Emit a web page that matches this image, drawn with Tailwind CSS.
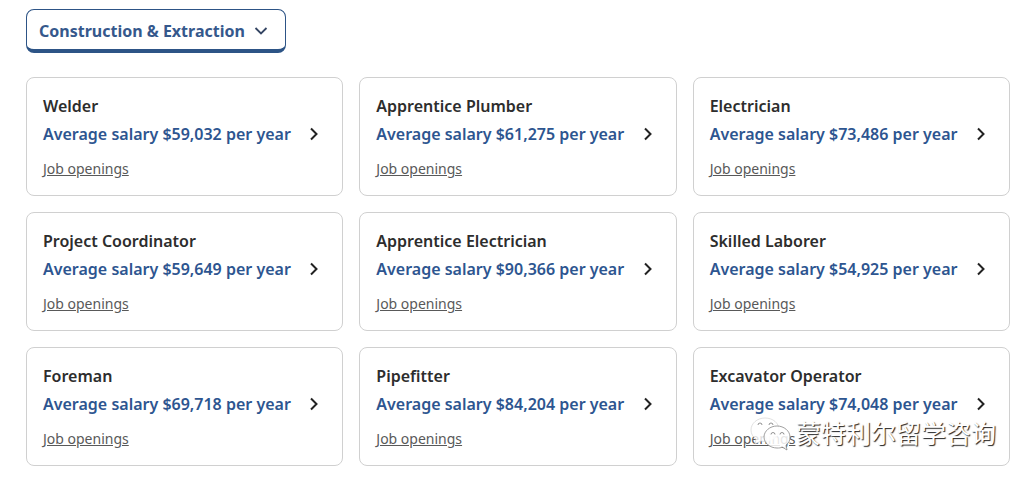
<!DOCTYPE html>
<html lang="en">
<head>
  <meta charset="UTF-8"/>
  <meta name="viewport" content="width=device-width, initial-scale=1.0"/>
  <title>Construction &amp; Extraction Salaries</title>
  <script src="https://cdn.jsdelivr.net/npm/@tailwindcss/browser@4"></script>
</head>
<body class="bg-white font-['Noto_Sans','Noto_Sans_CJK_SC',sans-serif] text-[#2d2d2d]">

<main class="relative pt-[9px] pb-3 pl-[26px] pr-5">

  <!-- Category picker -->
  <button type="button" class="flex items-center gap-2 h-11 pt-[2px] pl-3 pr-4 rounded-lg border border-b-4 border-[#2d5486] font-bold text-[#35588c]">
    Construction &amp; Extraction
    <svg class="size-4" viewBox="0 0 16 16" fill="none" stroke="#344563" stroke-width="1.8" aria-hidden="true">
      <path d="M2.500 5 8 10.500 13.500 5"/>
    </svg>
  </button>

  <!-- Salary cards, filled by the script below -->
  <div id="jobGrid" class="mt-6 grid grid-cols-3 gap-4"></div>

  <!-- Account watermark -->
  <div class="absolute right-[34px] bottom-[25px] flex items-center pointer-events-none">
    <svg class="w-12 h-10" viewBox="0 0 48 40" aria-hidden="true">
      <path d="M17 5C9 5 3 10.500 3 17c0 4 2 7 5 9l-1 5 6-3c9 2 18-3 18-11C31 10 25 5 17 5Z" fill="#fff" fill-opacity=".8" stroke="#ccc" stroke-width=".6"/>
      <path d="M29 13c-7 0-13 5-13 11s6 11 13 11c2 0 4 0 5-1l5 3-1-5c3-2 4-5 4-8 0-6-6-11-13-11Z" fill="#fff" fill-opacity=".85" stroke="#888" stroke-width=".8"/>
      <path d="M10 12a2 2 0 0 1 4 0M21 12a2 2 0 0 1 4 0M23 21.500a2 2 0 0 1 4 0M32 21.500a2 2 0 0 1 4 0" fill="none" stroke="#777" stroke-width=".8"/>
    </svg>
    <span lang="zh" class="text-[25px] leading-10 text-white text-shadow-[1px_1px_1px_#222]">蒙特利尔留学咨询</span>
  </div>
</main>

<script>
  const jobs = [
    { title: "Welder", salary: "$59,032" },
    { title: "Apprentice Plumber", salary: "$61,275" },
    { title: "Electrician", salary: "$73,486" },
    { title: "Project Coordinator", salary: "$59,649" },
    { title: "Apprentice Electrician", salary: "$90,366" },
    { title: "Skilled Laborer", salary: "$54,925" },
    { title: "Foreman", salary: "$69,718" },
    { title: "Pipefitter", salary: "$84,204" },
    { title: "Excavator Operator", salary: "$74,048" }
  ];

  document.getElementById("jobGrid").innerHTML = jobs.map(({ title, salary }) => `
    <article class="rounded-lg border border-[#d0d0d0] px-4 pt-[14px] pb-4">
      <h2 class="font-semibold leading-7">${title}</h2>
      <a href="#" class="flex items-center justify-between font-semibold leading-7 text-[#2d5590]">
        Average salary ${salary} per year
        <svg class="w-6 h-4" viewBox="0 0 24 16" fill="none" stroke="#222" stroke-width="2" aria-hidden="true">
          <path d="m9 2.500 5.500 5.500L9 13.500"/>
        </svg>
      </a>
      <a href="#" class="mt-[11px] block w-fit text-sm leading-5 text-[#595959] underline">Job openings</a>
    </article>`).join("");
</script>

</body>
</html>
